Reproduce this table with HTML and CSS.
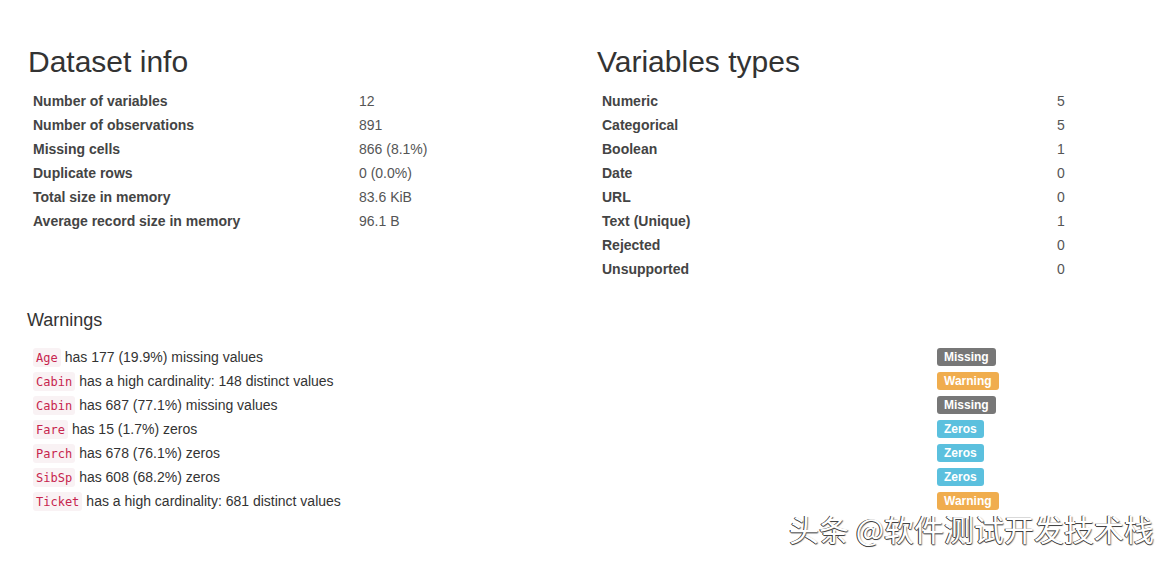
FILE: index.html
```html
<!DOCTYPE html>
<html>
<head>
<meta charset="utf-8">
<link rel="stylesheet" href="styles.css">
</head>
<body>
<div class="page">
  <div class="row">
    <section class="col">
      <h1 class="title">Dataset info</h1>
      <div class="stats stats-left">
        <div class="lbl">Number of variables</div><div class="val">12</div>
        <div class="lbl">Number of observations</div><div class="val">891</div>
        <div class="lbl">Missing cells</div><div class="val">866 (8.1%)</div>
        <div class="lbl">Duplicate rows</div><div class="val">0 (0.0%)</div>
        <div class="lbl">Total size in memory</div><div class="val">83.6 KiB</div>
        <div class="lbl">Average record size in memory</div><div class="val">96.1 B</div>
      </div>
    </section>
    <section class="col">
      <h1 class="title">Variables types</h1>
      <div class="stats stats-right">
        <div class="lbl">Numeric</div><div class="val">5</div>
        <div class="lbl">Categorical</div><div class="val">5</div>
        <div class="lbl">Boolean</div><div class="val">1</div>
        <div class="lbl">Date</div><div class="val">0</div>
        <div class="lbl">URL</div><div class="val">0</div>
        <div class="lbl">Text (Unique)</div><div class="val">1</div>
        <div class="lbl">Rejected</div><div class="val">0</div>
        <div class="lbl">Unsupported</div><div class="val">0</div>
      </div>
    </section>
  </div>
  <section class="warnings">
    <h4 class="subtitle">Warnings</h4>
    <div class="warn-list">
      <div class="msg"><code>Age</code> has 177 (19.9%) missing values</div><div><span class="badge missing">Missing</span></div>
      <div class="msg"><code>Cabin</code> has a high cardinality: 148 distinct values</div><div><span class="badge warning">Warning</span></div>
      <div class="msg"><code>Cabin</code> has 687 (77.1%) missing values</div><div><span class="badge missing">Missing</span></div>
      <div class="msg"><code>Fare</code> has 15 (1.7%) zeros</div><div><span class="badge zeros">Zeros</span></div>
      <div class="msg"><code>Parch</code> has 678 (76.1%) zeros</div><div><span class="badge zeros">Zeros</span></div>
      <div class="msg"><code>SibSp</code> has 608 (68.2%) zeros</div><div><span class="badge zeros">Zeros</span></div>
      <div class="msg"><code>Ticket</code> has a high cardinality: 681 distinct values</div><div><span class="badge warning">Warning</span></div>
    </div>
  </section>
</div>
<div class="watermark">头条 @软件测试开发技术栈</div>
</body>
</html>
```
FILE: styles.css
```css
html, body {
  margin: 0;
  padding: 0;
  background: #fff;
}
body {
  font-family: "Liberation Sans", Arial, sans-serif;
  font-size: 14px;
  line-height: 20px;
  color: #333;
  width: 1166px;
  height: 561px;
  overflow: hidden;
  position: relative;
}
.page {
  padding: 45px 0 0 28px;
}
.row {
  display: flex;
}
.col {
  width: 570px;
}
.title {
  margin: 0 0 11px 0;
  font-size: 30px;
  font-weight: normal;
  line-height: 33px;
  color: #333;
}
.stats {
  display: grid;
}
.stats-left {
  grid-template-columns: 326px auto;
}
.stats-right {
  grid-template-columns: 455px auto;
}
.stats .lbl, .stats .val {
  padding: 2px 5px;
  height: 20px;
}
.stats .lbl {
  font-weight: bold;
  color: #444;
}
.stats .val {
  color: #555;
}
.warnings {
  margin-top: 29px;
}
.subtitle {
  margin: 0 0 15px -1px;
  font-size: 18px;
  font-weight: normal;
  line-height: 20px;
  color: #333;
}
.warn-list {
  display: grid;
  grid-template-columns: 909px auto;
}
.warn-list > div {
  height: 24px;
  display: flex;
  align-items: center;
}
.msg {
  padding-left: 5px;
}
code {
  font-family: "DejaVu Sans Mono", "Liberation Mono", monospace;
  font-size: 12px;
  line-height: 18px;
  padding: 1px 3px 0 3px;
  margin-right: 4px;
  color: #c7254e;
  background: #f9f2f4;
  border-radius: 3px;
}
.badge {
  display: inline-block;
  font-size: 12px;
  font-weight: bold;
  line-height: 18px;
  padding: 0 7px;
  color: #fff;
  border-radius: 3px;
}
.missing { background: #777; }
.warning { background: #f0ad4e; }
.zeros { background: #5bc0de; }
.watermark {
  position: absolute;
  left: 789px;
  top: 509px;
  font-family: "Noto Sans CJK SC", sans-serif;
  font-size: 30px;
  line-height: 38px;
  color: #fff;
  text-shadow: -1px 0 0 #333, 0 1px 0 #444, 1px 1px 1px #999;
  white-space: nowrap;
}
```
